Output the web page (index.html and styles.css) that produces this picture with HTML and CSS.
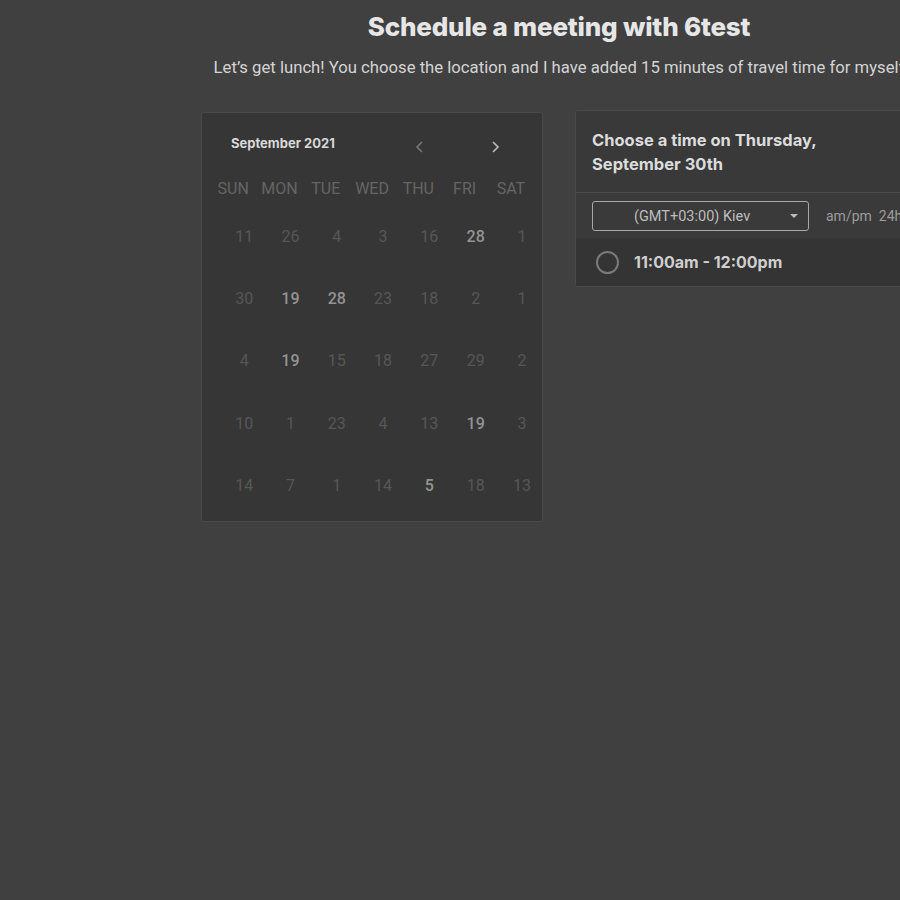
FILE: index.html
```html
<!DOCTYPE html>
<html>
<head>
<meta charset="utf-8">
<link rel="stylesheet" href="styles.css">
</head>
<body>
<div class="page">
  <h1 class="title">Schedule a meeting with 6test</h1>
  <p class="subtitle">Let’s get lunch! You choose the location and I have added 15 minutes of travel time for myself</p>
  <div class="panels">
    <section class="calendar">
      <div class="cal-head">
        <span class="month">September 2021</span>
        <div class="navs">
          <svg class="nav prev" width="12" height="14" viewBox="0 0 12 14"><path d="M8 2 L3 7 L8 12" fill="none" stroke="#777" stroke-width="1.6"/></svg>
          <svg class="nav next" width="12" height="14" viewBox="0 0 12 14"><path d="M4 2 L9 7 L4 12" fill="none" stroke="#bbb" stroke-width="1.6"/></svg>
        </div>
      </div>
      <div class="weekdays">
        <span>SUN</span><span>MON</span><span>TUE</span><span>WED</span><span>THU</span><span>FRI</span><span>SAT</span>
      </div>
      <div class="days">
        <span>11</span><span>26</span><span>4</span><span>3</span><span>16</span><span class="on">28</span><span>1</span>
        <span>30</span><span class="on">19</span><span class="on">28</span><span>23</span><span>18</span><span>2</span><span>1</span>
        <span>4</span><span class="on">19</span><span>15</span><span>18</span><span>27</span><span>29</span><span>2</span>
        <span>10</span><span>1</span><span>23</span><span>4</span><span>13</span><span class="on">19</span><span>3</span>
        <span>14</span><span>7</span><span>1</span><span>14</span><span class="on">5</span><span>18</span><span>13</span>
      </div>
    </section>
    <section class="times">
      <div class="times-head">Choose a time on Thursday,<br>September 30th</div>
      <div class="tz-row">
        <div class="tz-select">
          <span>(GMT+03:00) Kiev</span>
          <svg class="caret" width="8" height="4" viewBox="0 0 8 4"><path d="M0 0 H8 L4 4 Z" fill="#bbb"/></svg>
        </div>
        <div class="fmt"><span>am/pm</span><span>24h</span></div>
      </div>
      <div class="slot">
        <span class="radio"></span>
        <span class="slot-text">11:00am - 12:00pm</span>
      </div>
    </section>
  </div>
</div>
</body>
</html>
```
FILE: styles.css
```css
html, body {
  margin: 0;
  padding: 0;
  background: #404040;
  overflow: hidden;
  width: 900px;
  height: 900px;
}
.page {
  width: 716px;
  margin-left: 201px;
  display: flex;
  flex-direction: column;
  align-items: center;
}
.title {
  margin: 11px 0 0 0;
  font-family: Inter, "Noto Sans", sans-serif;
  font-weight: 800;
  font-size: 26px;
  line-height: 32px;
  color: #e6e6e6;
  letter-spacing: -0.2px;
  white-space: nowrap;
}
.subtitle {
  margin: 15px 0 0 0;
  font-family: Roboto, sans-serif;
  font-size: 16.7px;
  line-height: 20px;
  color: #d4d4d4;
  white-space: nowrap;
}
.panels {
  align-self: stretch;
  display: flex;
  align-items: flex-start;
  gap: 32px;
  margin-top: 32px;
}
.calendar {
  width: 340px;
  height: 408px;
  margin-top: 2px;
  flex: none;
  background: #363636;
  border: 1px solid #4a4a4a;
  border-radius: 3px;
  box-sizing: content-box;
}
.cal-head {
  display: flex;
  align-items: center;
  justify-content: space-between;
  padding: 19px 41px 0 29px;
  height: 22px;
}
.month {
  font-family: Inter, sans-serif;
  font-weight: 700;
  font-size: 13px;
  color: #d8d8d8;
}
.navs {
  display: flex;
  gap: 63px;
  padding-top: 8px;
}
.weekdays {
  display: grid;
  grid-template-columns: repeat(7, 46.3px);
  padding-left: 8px;
  margin-top: 25px;
  font-family: Roboto, sans-serif;
  font-size: 16px;
  line-height: 20px;
  color: #656565;
  text-align: center;
}
.days {
  display: grid;
  grid-template-columns: repeat(7, 46.3px);
  grid-auto-rows: 62.3px;
  padding-left: 19px;
  margin-top: 6px;
  font-family: Roboto, sans-serif;
  font-size: 16px;
  color: #575757;
  text-align: center;
  align-items: center;
}
.days .on {
  color: #939393;
  font-weight: 500;
}
.times {
  flex: none;
  width: 380px;
  background: #363636;
  border: 1px solid #4a4a4a;
  border-radius: 3px;
  overflow: hidden;
}
.times-head {
  background: #393939;
  padding: 17px 16px 16px 16px;
  font-family: Inter, sans-serif;
  font-weight: 700;
  font-size: 16.5px;
  line-height: 24px;
  color: #dcdcdc;
  border-bottom: 1px solid #4c4c4c;
}
.tz-row {
  display: flex;
  align-items: center;
  gap: 17px;
  padding: 8px 16px 7px 16px;
  background: #3a3a3a;
}
.tz-select {
  width: 217px;
  height: 30px;
  border: 1px solid #a8a8a8;
  border-radius: 3px;
  display: flex;
  align-items: center;
  justify-content: space-between;
  padding: 0 10px 0 41px;
  box-sizing: border-box;
  font-family: Roboto, sans-serif;
  font-size: 14.5px;
  color: #bdbdbd;
}
.fmt {
  display: flex;
  gap: 7px;
  font-family: Roboto, sans-serif;
  font-size: 14px;
  color: #9c9c9c;
}
.slot {
  display: flex;
  align-items: center;
  height: 48px;
  padding-left: 20px;
  background: #343434;
}
.radio {
  width: 23px;
  height: 23px;
  border: 2px solid #7a7a7a;
  border-radius: 50%;
  box-sizing: border-box;
}
.slot-text {
  margin-left: 15px;
  font-family: Inter, sans-serif;
  font-weight: 700;
  font-size: 16px;
  color: #cfcfcf;
}
```
